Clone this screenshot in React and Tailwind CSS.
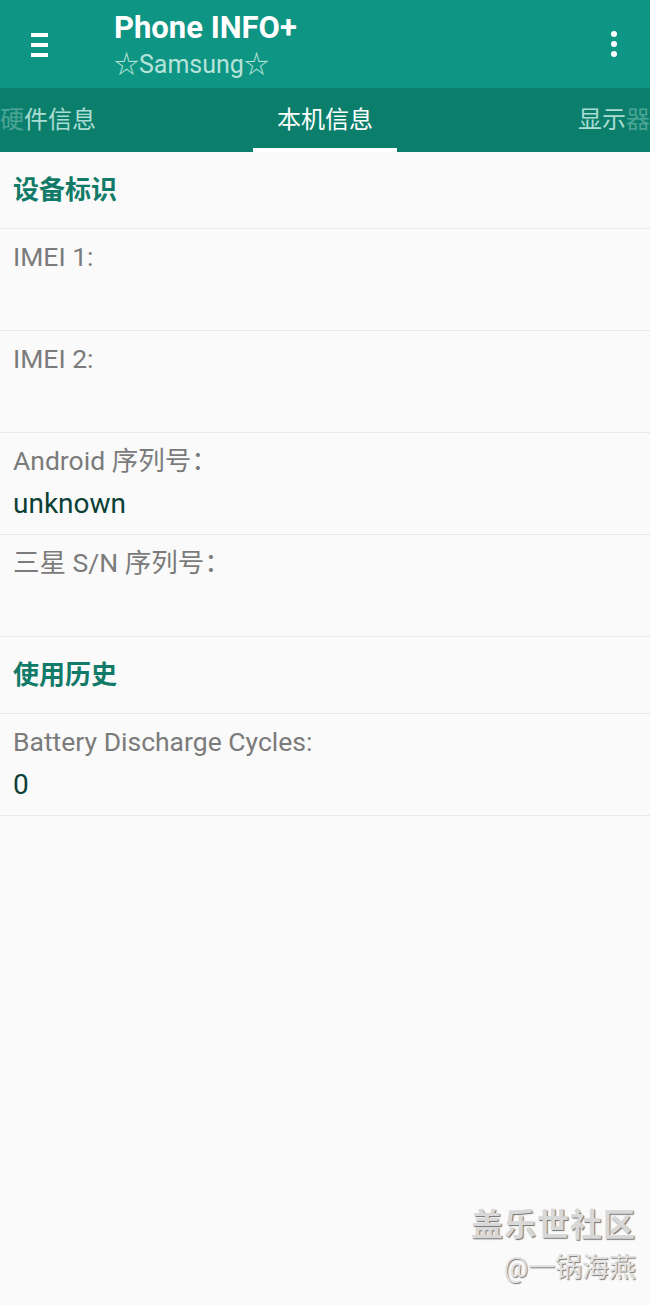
import React from "react";

const latin = { fontFamily: "Roboto, 'Noto Sans CJK SC', sans-serif" };

function Section({ title }) {
  return (
    <div className="h-[77px] flex items-center px-[13px] border-b border-[#e9e9e9]">
      <span className="text-[26px] font-bold text-[#127a68] leading-none">{title}</span>
    </div>
  );
}

function Item({ label, value }) {
  return (
    <div className="h-[102px] border-b border-[#e9e9e9] px-[13px] pt-[12px]">
      <div className="text-[26.5px] leading-[32px] text-[#7b7b7b]">{label}</div>
      {value !== undefined && (
        <div className="text-[28px] leading-[32px] mt-[11px] text-[#0c3f36]">{value}</div>
      )}
    </div>
  );
}

export default function App() {
  return (
    <div className="relative w-[650px] h-[1305px] bg-[#fafafa] overflow-hidden" style={latin}>
      {/* App bar */}
      <div className="h-[88px] bg-[#0f9584] flex">
        <div className="w-[114px] shrink-0 flex pl-[31px] pt-[33px]">
          <div className="flex flex-col gap-[6px]">
            <div className="w-[17px] h-[4px] bg-white" />
            <div className="w-[17px] h-[4px] bg-white" />
            <div className="w-[17px] h-[4px] bg-white" />
          </div>
        </div>
        <div className="flex-1 flex flex-col pt-[10px]">
          <div className="text-[31px] leading-[36px] font-bold text-white">Phone INFO+</div>
          <div className="text-[25px] leading-[30px] text-[#b6e3da] mt-[4px]">☆Samsung☆</div>
        </div>
        <div className="w-[70px] shrink-0 flex justify-center pr-[2px] pt-[31px]">
          <div className="flex flex-col gap-[4px] items-center">
            <div className="w-[6px] h-[6px] rounded-full bg-white" />
            <div className="w-[6px] h-[6px] rounded-full bg-white" />
            <div className="w-[6px] h-[6px] rounded-full bg-white" />
          </div>
        </div>
      </div>

      {/* Tabs */}
      <div className="relative h-[64px] bg-[#0c7f6c] flex items-center overflow-hidden whitespace-nowrap text-[24px]">
        <div className="w-[253px] shrink-0 flex">
          <span className="text-[#a9ddd3]">
            <span className="opacity-40">硬</span>件信息
          </span>
        </div>
        <div className="w-[144px] shrink-0 h-full flex flex-col items-center justify-center relative">
          <span className="text-white">本机信息</span>
          <div className="absolute bottom-0 left-0 right-0 h-[4px] bg-white" />
        </div>
        <div className="shrink-0 flex pl-[181px]">
          <span className="text-[#a9ddd3]">
            显示<span className="opacity-40">器</span>
          </span>
        </div>
      </div>

      {/* Content */}
      <div>
        <Section title="设备标识" />
        <Item label="IMEI 1:" />
        <Item label="IMEI 2:" />
        <Item label="Android 序列号：" value="unknown" />
        <Item label="三星 S/N 序列号：" />
        <Section title="使用历史" />
        <Item label="Battery Discharge Cycles:" value="0" />
      </div>

      {/* Watermark */}
      <div className="absolute right-[14px] top-[1209px] flex flex-col items-end leading-none">
        <span
          className="text-[32px] font-bold text-[#d8d8d8] tracking-[1px]"
          style={{ textShadow: "1px 1px 1px #6f6f6f" }}
        >
          盖乐世社区
        </span>
        <span
          className="text-[27px] text-[#e2e2e2] mt-[14px]"
          style={{ textShadow: "1px 1px 1px #7a7a7a" }}
        >
          @一锅海燕
        </span>
      </div>
    </div>
  );
}
